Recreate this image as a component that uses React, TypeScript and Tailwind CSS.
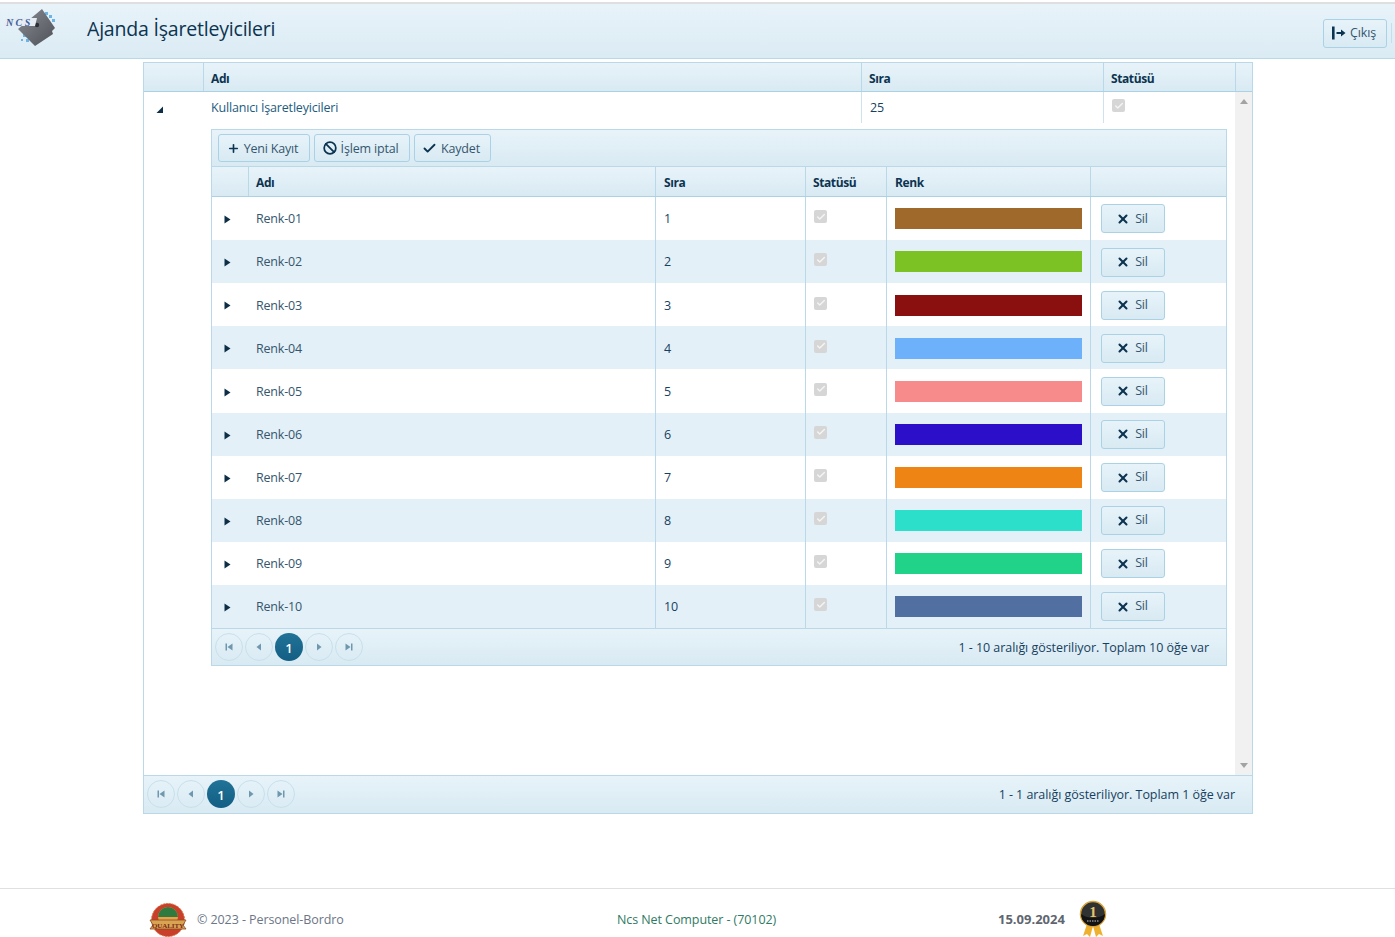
import React from 'react';
import { Plus, X, Check, Ban } from 'lucide-react';

const rows = [
  { name: 'Renk-01', color: '#9f692c' },
  { name: 'Renk-02', color: '#7dc224' },
  { name: 'Renk-03', color: '#8a1010' },
  { name: 'Renk-04', color: '#6db1fa' },
  { name: 'Renk-05', color: '#f78a8a' },
  { name: 'Renk-06', color: '#2c0fc9' },
  { name: 'Renk-07', color: '#ee8413' },
  { name: 'Renk-08', color: '#2bdfca' },
  { name: 'Renk-09', color: '#20d388' },
  { name: 'Renk-10', color: '#516fa0' },
];

const Caret = () => (
  <svg width="7" height="9" viewBox="0 0 7 9" className="text-[#0c2f47]">
    <path d="M0.5 0.5 L6.5 4.5 L0.5 8.5 Z" fill="currentColor" />
  </svg>
);

const Checked = () => (
  <span className="flex h-[13px] w-[13px] items-center justify-center rounded-[2px] bg-[#d6d6d6]">
    <Check size={10} strokeWidth={3.5} className="text-[#f4f4f4]" />
  </span>
);

const PagerIcon = ({ d }: { d: string }) => (
  <svg width="8" height="8" viewBox="0 0 8 8" className="text-[#6f97ad]">
    <path d={d} fill="currentColor" />
  </svg>
);

const Pager = ({ info }: { info: string }) => (
  <div className="flex h-full items-start justify-between bg-gradient-to-b from-[#e7f3f9] to-[#d9eaf3] pl-[3px] pt-[4px]">
    <div className="flex items-center gap-[2px]">
      <button className="flex h-[28px] w-[28px] items-center justify-center rounded-full border border-[#c8e0ec]"><PagerIcon d="M0.5 0.5h1.5v7h-1.5z M7.5 0.5v7L2.5 4z" /></button>
      <button className="flex h-[28px] w-[28px] items-center justify-center rounded-full border border-[#c8e0ec]"><PagerIcon d="M6 0.5v7L1.5 4z" /></button>
      <button className="flex h-[28px] w-[28px] items-center justify-center rounded-full bg-gradient-to-b from-[#217397] to-[#135e84] pt-[3px] text-[13px] font-semibold text-white">1</button>
      <button className="flex h-[28px] w-[28px] items-center justify-center rounded-full border border-[#c8e0ec]"><PagerIcon d="M2 0.5v7L6.5 4z" /></button>
      <button className="flex h-[28px] w-[28px] items-center justify-center rounded-full border border-[#c8e0ec]"><PagerIcon d="M0.5 0.5v7L5.5 4z M6 0.5h1.5v7H6z" /></button>
    </div>
    <span className="flex h-[28px] items-center pr-[17px] pt-[2px] tracking-[-0.05px] text-[#173f5f]">{info}</span>
  </div>
);

const ToolButton = ({ icon, label, w }: { icon: React.ReactNode; label: string; w: string }) => (
  <button className={`flex h-[28px] items-center justify-center gap-[4px] rounded-[3px] border border-[#a9d2e6] bg-gradient-to-b from-[#e7f3f9] to-[#d9eaf3] ${w} pr-[3px] pt-[3px] text-[#35566e]`}>
    <span className="-mt-[3px]">{icon}</span>
    {label}
  </button>
);

const Logo = () => (
  <svg width="56" height="40" viewBox="0 0 56 40">
    <defs>
      <linearGradient id="logoBody" x1="0" y1="0" x2="1" y2="1">
        <stop offset="0" stopColor="#8a8c94" />
        <stop offset="1" stopColor="#4e5058" />
      </linearGradient>
    </defs>
    <g fill="#6db4e6">
      <rect x="43" y="4" width="3" height="3" />
      <rect x="47" y="7" width="3" height="3" />
      <rect x="50" y="11" width="3" height="3" />
      <rect x="47" y="14" width="2" height="2" />
      <rect x="21" y="26" width="3" height="3" />
      <rect x="24" y="31" width="3" height="3" />
      <rect x="19" y="31" width="2" height="2" />
    </g>
    <path d="M40 1 L53 20 L50 23 L51 26 L33 38 L16 21 Z" fill="url(#logoBody)" />
    <circle cx="35" cy="17" r="2.2" fill="#2f3035" />
    <path d="M5 10 H35 L33 18 H2 Z" fill="#e6ecf4" />
    <text x="4" y="17.5" fontFamily="'Liberation Serif', serif" fontStyle="italic" fontWeight="700" fontSize="10" letterSpacing="2.4" fill="#3c5f9c">NCS</text>
  </svg>
);

const Seal = () => (
  <svg width="38" height="34" viewBox="0 0 38 34">
    <circle cx="19" cy="17" r="16.5" fill="#c8402a" stroke="#d9703f" strokeDasharray="2 1" />
    <circle cx="19" cy="14" r="10" fill="#e9a14a" />
    <path d="M9 14 a10 10 0 0 1 20 0 z" fill="#2f7a3f" />
    <path d="M1 17 h36 l-3 5 3 4 H1 l3 -4 z" fill="#d8a452" stroke="#8e4a21" strokeWidth="0.8" />
    <text x="19" y="24.5" textAnchor="middle" fontFamily="'Liberation Serif', serif" fontWeight="700" fontSize="7" fill="#7b2a17">QUALITY</text>
  </svg>
);

const Medal = () => (
  <svg width="28" height="38" viewBox="0 0 28 38">
    <path d="M8 24 L4 36 L8 34 L11 37 L14 26 L17 37 L20 34 L24 36 L20 24 Z" fill="#eeb02f" />
    <circle cx="14" cy="14" r="12.5" fill="#2f3231" stroke="#d9a43a" strokeWidth="1.5" />
    <path d="M2 14 a12 12 0 0 0 24 0 a14 8 0 0 1 -24 0z" fill="#121312" />
    <text x="14" y="17" textAnchor="middle" fontFamily="'Liberation Serif', serif" fontWeight="700" fontSize="15" fill="#e8c46a">1</text>
    <path d="M8 21h12" stroke="#c9c9c9" strokeWidth="1" strokeDasharray="1.5 1" />
  </svg>
);

const headCell = 'flex items-center border-r border-[#b9d9e9] px-[7px] pt-[3px]';

export default function App() {
  return (
    <div className="h-[937px] overflow-hidden bg-white font-['Open_Sans',sans-serif] text-[12.5px] tracking-[-0.18px] text-[#173f5f]">
      <div className="h-[2px] bg-white" />
      <header className="flex h-[57px] items-center justify-between border-t-2 border-b border-t-[#dfdfdf] border-b-[#b9d9e9] bg-gradient-to-b from-[#e8f3f9] to-[#dbebf4]">
        <div className="flex items-center">
          <div className="mb-[7px] ml-[2px] w-[85px]"><Logo /></div>
          <h1 className="mb-[4px] text-[19.5px] tracking-[-0.2px] text-[#0c3450]">Ajanda İşaretleyicileri</h1>
        </div>
        <div className="mt-[4px] flex items-center">
          <button className="flex h-[29px] w-[64px] items-center justify-center gap-[4px] rounded-[3px] border border-[#a9d2e6] bg-gradient-to-b from-[#e7f3f9] to-[#d9eaf3] pr-[2px] text-[#35566e]">
            <svg width="14" height="14" viewBox="0 0 14 14">
              <rect x="0" y="0.5" width="2.6" height="13" fill="#0c3450" />
              <path d="M4.5 6h4.5V3.6L13.5 7 9 10.4V8H4.5z" fill="#0c3450" />
            </svg>
            Çıkış
          </button>
          <div className="ml-[4px] mr-[3px] h-[20px] w-px bg-[#c4dfec]" />
        </div>
      </header>

      <main className="ml-[143px] mt-[3px] w-[1110px] border border-[#b9d9e9]">
        <div className="flex h-[29px] border-b border-[#a9d2e6] bg-gradient-to-b from-[#e8f3f9] to-[#d9eaf3] text-[12px] font-bold tracking-[-0.4px] text-[#0c3450]">
          <div className="w-[60px] border-r border-[#b9d9e9]" />
          <div className={`${headCell} w-[658px]`}>Adı</div>
          <div className={`${headCell} w-[242px]`}>Sıra</div>
          <div className={`${headCell} w-[132px]`}>Statüsü</div>
        </div>

        <div className="flex h-[683px]">
          <div className="min-w-0 flex-1">
            <div className="flex h-[31px]">
              <div className="flex w-[60px] items-center justify-center pr-[29px] pt-[4px]">
                <svg width="7" height="7" viewBox="0 0 7 7"><path d="M7 0.5V7H0.5z" fill="#0c2f47" /></svg>
              </div>
              <div className="flex w-[658px] items-center border-r border-[#cfe3ee] px-[7px] pt-[1px] text-[#1c5c80]">Kullanıcı İşaretleyicileri</div>
              <div className="flex w-[242px] items-center border-r border-[#cfe3ee] px-[8px] pt-[1px]">25</div>
              <div className="px-[8px] pt-[7px]"><Checked /></div>
            </div>

            <div className="ml-[67px] mr-[8px] mt-[6px] border border-[#b9d9e9]">
              <div className="flex h-[37px] items-center gap-[4px] border-b border-[#b9d9e9] bg-gradient-to-b from-[#e8f3f9] to-[#d9eaf3] pl-[6px]">
                <ToolButton w="w-[92px]" icon={<Plus size={13} strokeWidth={3} className="text-[#0c3450]" />} label="Yeni Kayıt" />
                <ToolButton w="w-[96px]" icon={<Ban size={14} strokeWidth={3} className="text-[#0c3450]" />} label="İşlem iptal" />
                <ToolButton w="w-[77px]" icon={<Check size={15} strokeWidth={3} className="text-[#0c3450]" />} label="Kaydet" />
              </div>
              <div className="flex h-[30.1px] border-b border-[#a9d2e6] bg-gradient-to-b from-[#e8f3f9] to-[#d9eaf3] text-[12px] font-bold tracking-[-0.4px] text-[#0c3450]">
                <div className="w-[37px] border-r border-[#b9d9e9]" />
                <div className={`${headCell} w-[407px]`}>Adı</div>
                <div className={`${headCell} w-[150px] pl-[8px]`}>Sıra</div>
                <div className={`${headCell} w-[81px]`}>Statüsü</div>
                <div className={`${headCell} w-[204px] pl-[8px]`}>Renk</div>
              </div>
              {rows.map((r, i) => (
                <div key={r.name} className={`flex h-[43.1px] items-center ${i % 2 === 1 ? 'bg-[#e4f0f7]' : 'bg-white'}`}>
                  <div className="flex w-[37px] justify-center pr-[6px] pt-[2px]"><Caret /></div>
                  <div className="flex h-full w-[407px] items-center border-r border-[#b9d9e9] px-[7px] pt-[2.1px] text-[#35566e]">{r.name}</div>
                  <div className="flex h-full w-[150px] items-center border-r border-[#b9d9e9] px-[8px] pt-[2.1px]">{i + 1}</div>
                  <div className="flex h-full w-[81px] items-start border-r border-[#b9d9e9] px-[8px] pt-[13.25px]"><Checked /></div>
                  <div className="flex h-full w-[204px] items-center border-r border-[#b9d9e9] px-[8px] pt-[0.4px]">
                    <div className="h-[21px] w-[187px]" style={{ backgroundColor: r.color }} />
                  </div>
                  <div className="pl-[10px] pt-[0.7px]">
                    <button className="flex h-[29px] w-[64px] items-center justify-center gap-[5px] rounded-[3px] border border-[#a9d2e6] bg-gradient-to-b from-[#e7f3f9] to-[#d9eaf3] pr-[2px] text-[#35566e]">
                      <X size={14} strokeWidth={3.5} className="text-[#0c3450]" />
                      Sil
                    </button>
                  </div>
                </div>
              ))}
              <div className="h-[36.9px] border-t border-[#b9d9e9]">
                <Pager info="1 - 10 aralığı gösteriliyor. Toplam 10 öğe var" />
              </div>
            </div>
          </div>

          <div className="flex w-[17px] flex-col items-center justify-between bg-[#f1f1f1] py-[7px]">
            <svg width="8" height="5" viewBox="0 0 8 5"><path d="M4 0L8 5H0z" fill="#a3a3a3" /></svg>
            <svg width="8" height="5" viewBox="0 0 8 5"><path d="M4 5L8 0H0z" fill="#a3a3a3" /></svg>
          </div>
        </div>

        <div className="h-[38px] border-t border-[#b9d9e9]">
          <Pager info="1 - 1 aralığı gösteriliyor. Toplam 1 öğe var" />
        </div>
      </main>

      <footer className="mt-[74px] flex h-[49px] items-center border-t border-[#e0e0e0] tracking-[-0.08px] text-[#6b7686]">
        <div className="ml-[149px] mt-[14px]"><Seal /></div>
        <span className="ml-[10px] w-[420px] pt-[15px]">© 2023 - Personel-Bordro</span>
        <span className="w-[381px] pt-[15px] text-[#2f7a63]">Ncs Net Computer - (70102)</span>
        <span className="pt-[13px] text-[13px] font-bold tracking-normal text-[#5f6670]">15.09.2024</span>
        <div className="ml-[14px] mt-[11px]"><Medal /></div>
      </footer>
    </div>
  );
}
